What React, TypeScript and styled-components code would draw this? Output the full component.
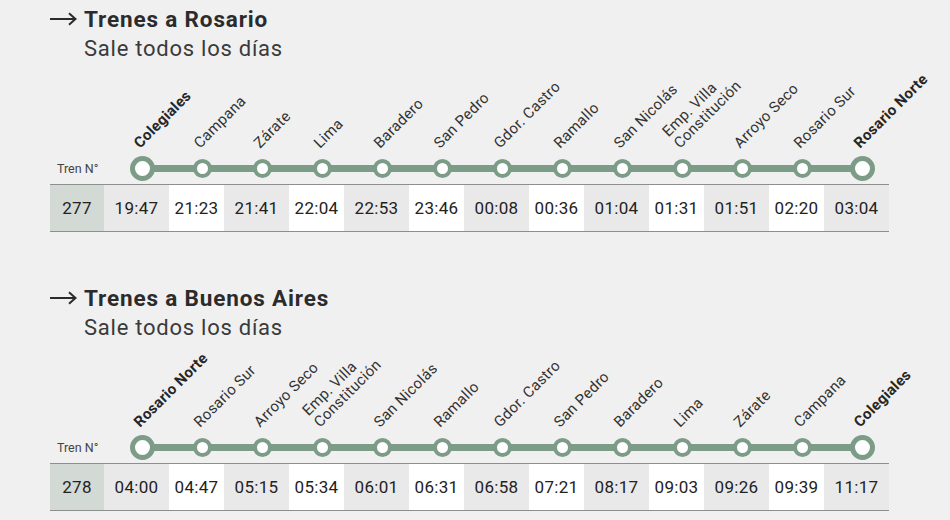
import React from 'react';
import styled, { createGlobalStyle } from 'styled-components';

const GlobalStyle = createGlobalStyle`
  html, body {
    margin: 0;
    padding: 0;
    background: #f0f0f0;
  }
  body {
    font-family: Roboto, "Liberation Sans", sans-serif;
    color: #2f2f2f;
  }
`;

const GREEN = '#7c9c88';

const Page = styled.div`
  width: 950px;
  height: 520px;
  overflow: hidden;
  background: #f0f0f0;
  display: flex;
  flex-direction: column;
  gap: 47px;
`;

const Section = styled.section`
  padding: 6px 0 0 50px;
`;

const Heading = styled.h2`
  margin: 0;
  display: flex;
  align-items: center;
  gap: 7px;
  font-size: 22.5px;
  line-height: 26px;
  font-weight: 700;
  letter-spacing: 0.85px;
  color: #2b2b2b;
`;

const Subtitle = styled.div`
  padding: 3px 0 0 34px;
  font-size: 22px;
  line-height: 28px;
  letter-spacing: 0.75px;
  color: #3a3a3a;
`;

const StationRow = styled.div`
  display: flex;
  align-items: flex-end;
`;

const Lead = styled.div`
  flex: none;
  width: 55px;
  height: 24px;
  padding-left: 7px;
  display: flex;
  align-items: center;
  font-size: 12.5px;
  color: #444;
`;

const Stop = styled.div`
  flex: none;
  width: 60px;
  min-width: 0;
  display: flex;
  flex-direction: column;
`;

const LabelArea = styled.div`
  height: 88px;
  padding-left: 30px;
  display: flex;
  align-items: flex-end;
`;

const Label = styled.span<{ $terminal?: boolean }>`
  display: block;
  flex-shrink: 0;
  white-space: pre;
  font-size: 15px;
  line-height: 16px;
  letter-spacing: 0.3px;
  font-weight: ${(p) => (p.$terminal ? 700 : 400)};
  color: ${(p) => (p.$terminal ? '#262626' : '#333')};
  transform: rotate(-45deg);
  transform-origin: left bottom;
`;

const Track = styled.div<{ $first?: boolean; $last?: boolean }>`
  position: relative;
  height: 24px;
  margin-top: 5px;
  display: flex;
  align-items: center;
  justify-content: center;

  &::before {
    content: '';
    position: absolute;
    top: 8.5px;
    height: 7px;
    left: ${(p) => (p.$first ? '50%' : '0')};
    right: ${(p) => (p.$last ? '50%' : '0')};
    background: ${GREEN};
  }
`;

const Node = styled.div<{ $terminal?: boolean }>`
  position: relative;
  box-sizing: border-box;
  width: ${(p) => (p.$terminal ? 25 : 19)}px;
  height: ${(p) => (p.$terminal ? 25 : 19)}px;
  border-radius: 50%;
  background: #fff;
  border: ${(p) => (p.$terminal ? 5 : 4)}px solid ${GREEN};
`;

const TimeRow = styled.div`
  margin-top: 4px;
  display: grid;
  grid-template-columns: 54px repeat(6, 65px 55px) 65px;
  width: max-content;
  border-top: 1.5px solid #8e8e8e;
  border-bottom: 1.5px solid #8e8e8e;
`;

const Cell = styled.div<{ $tone: 'train' | 'grey' | 'white' }>`
  height: 46px;
  display: flex;
  align-items: center;
  justify-content: center;
  font-size: 17px;
  letter-spacing: 0.3px;
  color: #222;
  background: ${(p) =>
    p.$tone === 'train' ? '#d3d9d5' : p.$tone === 'grey' ? '#e9e9e9' : '#ffffff'};
`;

const Arrow = () => (
  <svg width="27" height="14" viewBox="0 0 27 14" fill="none">
    <path d="M0 7H25.5M19 1.2L25.5 7L19 12.8" stroke="#2b2b2b" strokeWidth="2" />
  </svg>
);

type Route = {
  title: string;
  train: string;
  stops: string[];
  times: string[];
};

const toRosario: string[] = [
  'Colegiales',
  'Campana',
  'Zárate',
  'Lima',
  'Baradero',
  'San Pedro',
  'Gdor. Castro',
  'Ramallo',
  'San Nicolás',
  'Emp. Villa\nConstitución',
  'Arroyo Seco',
  'Rosario Sur',
  'Rosario Norte',
];

const routes: Route[] = [
  {
    title: 'Trenes a Rosario',
    train: '277',
    stops: toRosario,
    times: ['19:47', '21:23', '21:41', '22:04', '22:53', '23:46', '00:08', '00:36', '01:04', '01:31', '01:51', '02:20', '03:04'],
  },
  {
    title: 'Trenes a Buenos Aires',
    train: '278',
    stops: [...toRosario].reverse(),
    times: ['04:00', '04:47', '05:15', '05:34', '06:01', '06:31', '06:58', '07:21', '08:17', '09:03', '09:26', '09:39', '11:17'],
  },
];

const Schedule = ({ route }: { route: Route }) => {
  const last = route.stops.length - 1;
  return (
    <Section>
      <Heading>
        <Arrow />
        {route.title}
      </Heading>
      <Subtitle>Sale todos los días</Subtitle>

      <StationRow>
        <Lead>Tren N°</Lead>
        {route.stops.map((name, i) => {
          const terminal = i === 0 || i === last;
          return (
            <Stop key={name}>
              <LabelArea>
                <Label $terminal={terminal}>{name}</Label>
              </LabelArea>
              <Track $first={i === 0} $last={i === last}>
                <Node $terminal={terminal} />
              </Track>
            </Stop>
          );
        })}
      </StationRow>

      <TimeRow>
        <Cell $tone="train">{route.train}</Cell>
        {route.times.map((t, i) => (
          <Cell key={i} $tone={i % 2 === 0 ? 'grey' : 'white'}>
            {t}
          </Cell>
        ))}
      </TimeRow>
    </Section>
  );
};

export default function App() {
  return (
    <Page>
      <GlobalStyle />
      {routes.map((r) => (
        <Schedule key={r.train} route={r} />
      ))}
    </Page>
  );
}
